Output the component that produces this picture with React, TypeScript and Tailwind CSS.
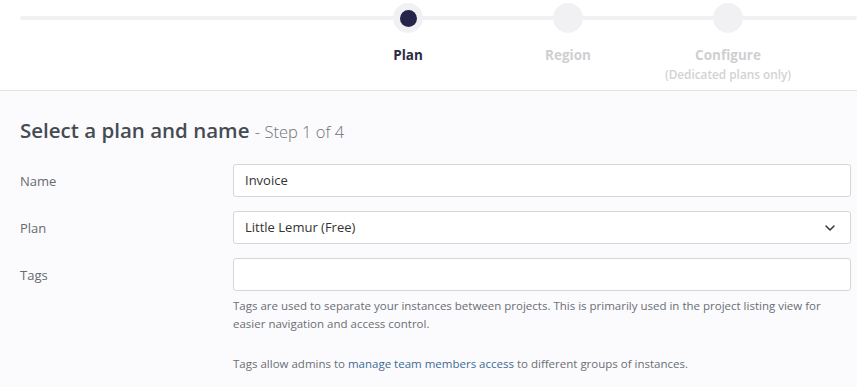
import { ChevronDown } from "lucide-react";

const steps = [
  { label: "Plan", active: true },
  { label: "Region", active: false },
  { label: "Configure", sub: "(Dedicated plans only)", active: false },
];

function Stepper() {
  return (
    <div className="relative h-[91px] border-b border-[#e3e3e6] bg-white">
      {/* track line */}
      <div className="absolute left-[20px] right-0 top-[16px] h-[4px] rounded-full bg-[#f1f1f3]" />
      <div className="absolute left-[328px] top-[3px] flex">
        {steps.map((s) => (
          <div key={s.label} className="flex w-[160px] flex-col items-center">
            <div className="flex h-[30px] w-[30px] items-center justify-center rounded-full bg-[#f1f1f4]">
              {s.active && <div className="h-[17px] w-[17px] rounded-full bg-[#25244b]" />}
            </div>
            <div
              className={`mt-[13px] text-[13.5px] font-bold leading-[18px] ${
                s.active ? "text-[#2b2b45]" : "text-[#cfcfd2]"
              }`}
            >
              {s.label}
            </div>
            {s.sub && (
              <div className="mt-[3px] text-[11.8px] font-semibold leading-[14px] text-[#d2d2d5]">
                {s.sub}
              </div>
            )}
          </div>
        ))}
      </div>
    </div>
  );
}

function Row({ label, children }: { label: string; children: React.ReactNode }) {
  return (
    <div className="flex">
      <div className="w-[213px] shrink-0 pt-[8px] text-[13px] leading-[18px] text-[#666a70]">{label}</div>
      <div className="flex-1">{children}</div>
    </div>
  );
}

export default function App() {
  return (
    <div
      className="h-[387px] w-[857px] overflow-hidden bg-[#fbfbfd]"
      style={{ fontFamily: '"Open Sans", sans-serif' }}
    >
      <Stepper />
      <main className="pl-[20px] pr-[6px] pt-[25px]">
        <h1 className="mb-[18px] text-[20.5px] font-semibold leading-[28px] text-[#464b53]">
          Select a plan and name{" "}
          <span className="text-[16.5px] font-light text-[#6f7379]">- Step 1 of 4</span>
        </h1>
        <div className="flex flex-col gap-[14px]">
          <Row label="Name">
            <div className="flex h-[33px] items-center rounded-[3px] border border-[#d6d6d9] bg-white px-[11px] text-[13px] text-[#333]">
              Invoice
            </div>
          </Row>
          <Row label="Plan">
            <div className="flex h-[33px] items-center justify-between rounded-[3px] border border-[#d6d6d9] bg-white pl-[11px] pr-[12px] text-[13px] text-[#333]">
              <span>Little Lemur (Free)</span>
              <ChevronDown size={16} strokeWidth={2.2} className="text-[#333]" />
            </div>
          </Row>
          <Row label="Tags">
            <div className="h-[33px] rounded-[3px] border border-[#d6d6d9] bg-white" />
            <p className="mt-[6px] pr-[20px] text-[11.5px] leading-[18px] text-[#6a6e74]">
              Tags are used to separate your instances between projects. This is primarily used in the project
              listing view for easier navigation and access control.
            </p>
            <p className="mt-[22px] text-[11.5px] leading-[18px] text-[#6a6e74]">
              Tags allow admins to <span className="text-[#3b6a96]">manage team members access</span> to different
              groups of instances.
            </p>
          </Row>
        </div>
      </main>
    </div>
  );
}
